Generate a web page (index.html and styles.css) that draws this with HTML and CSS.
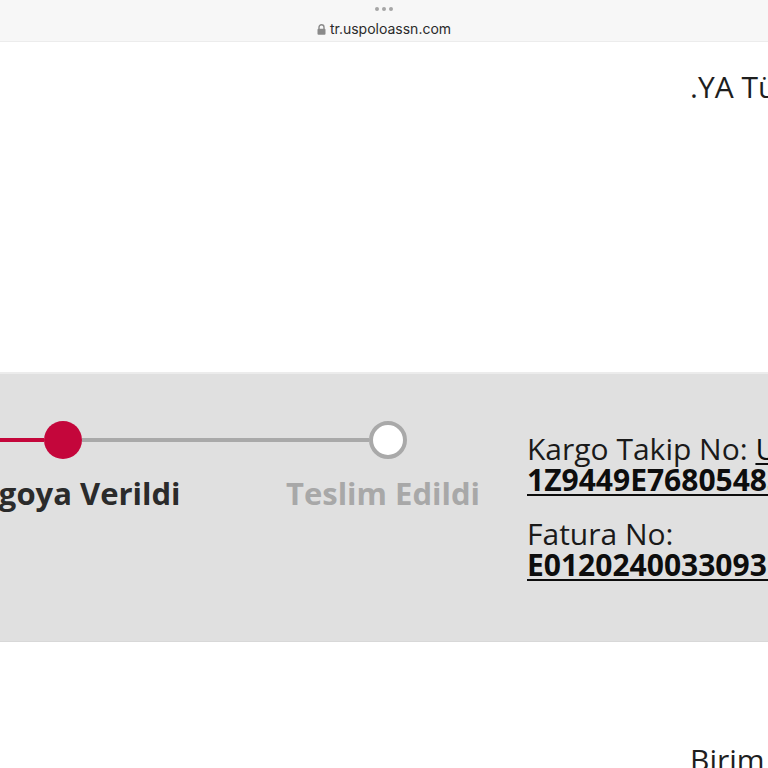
FILE: index.html
```html
<!DOCTYPE html>
<html lang="tr">
<head>
<meta charset="utf-8">
<link rel="stylesheet" href="styles.css">
</head>
<body>
<div class="page">
  <div class="topbar">
    <div class="dots"><span></span><span></span><span></span></div>
    <div class="url">
      <svg class="lock" width="9" height="11" viewBox="0 0 9 11"><path d="M2 5V3.3a2.5 2.5 0 0 1 5 0V5" fill="none" stroke="#8a8a8a" stroke-width="1.4"/><rect x="0.5" y="4.8" width="8" height="6" rx="1" fill="#8a8a8a"/></svg>
      <span>tr.uspoloassn.com</span>
    </div>
  </div>
  <div class="header">
    <div class="company">.YA Türkiye</div>
  </div>
  <div class="band">
    <div class="stepper">
      <div class="dot done"></div>
      <div class="line red"></div>
      <div class="dot done"></div>
      <div class="line gray"></div>
      <div class="dot open"></div>
      <div class="label c1 active">Hazırlanıyor</div>
      <div class="label c3 active">Kargoya Verildi</div>
      <div class="label c5 muted">Teslim Edildi</div>
    </div>
    <div class="info">
      <div class="row">
        <div>Kargo Takip No: <a class="val plain" href="#">UPS</a></div>
        <div><a class="val" href="#">1Z9449E76805483921</a></div>
      </div>
      <div class="row">
        <div>Fatura No:</div>
        <div><a class="val" href="#">E012024003309312</a></div>
      </div>
    </div>
  </div>
  <div class="bottom">
    <div class="unit">Birim Fiyat</div>
  </div>
</div>
</body>
</html>
```

FILE: styles.css
```css
html, body {
  margin: 0;
  padding: 0;
  background: #ffffff;
}
.page {
  width: 768px;
  height: 768px;
  overflow: hidden;
  font-family: "Open Sans", "Noto Sans", sans-serif;
  color: #1e1e1e;
}
.topbar {
  height: 42px;
  background: #f7f7f7;
  border-bottom: 1px solid #ececec;
  box-sizing: border-box;
  display: flex;
  flex-direction: column;
  align-items: center;
}
.dots {
  display: flex;
  gap: 3px;
  margin-top: 7px;
  height: 4px;
}
.dots span {
  width: 4px;
  height: 4px;
  border-radius: 50%;
  background: #a6a6a6;
}
.url {
  display: flex;
  align-items: center;
  gap: 4px;
  margin-top: 10px;
  font-family: "Inter", "Liberation Sans", sans-serif;
  font-size: 14px;
  line-height: 16px;
  color: #2a2a2a;
}
.lock { display: block; }
.header {
  height: 330px;
  box-sizing: border-box;
  padding-left: 690px;
  padding-top: 25px;
}
.company {
  font-size: 30px;
  line-height: 40px;
  white-space: nowrap;
  color: #1e1e1e;
}
.band {
  height: 270px;
  background: #e0e0e0;
  border-top: 2px solid #ececec;
  border-bottom: 1px solid #d8d8d8;
  box-sizing: border-box;
  display: flex;
  align-items: flex-start;
  padding-top: 47px;
}
.stepper {
  flex: none;
  margin-left: -281px;
  display: grid;
  grid-template-columns: 38px 287px 38px 287px 38px;
  grid-template-rows: 38px auto;
  row-gap: 16px;
}
.dot {
  width: 38px;
  height: 38px;
  border-radius: 50%;
  box-sizing: border-box;
  grid-row: 1;
}
.dot.done { background: #c4063b; }
.dot.open { background: #ffffff; border: 4px solid #a9a9a9; }
.line {
  grid-row: 1;
  align-self: center;
  height: 4px;
}
.line.red { background: #c4063b; }
.line.gray { background: #a9a9a9; }
.label {
  grid-row: 2;
  justify-self: center;
  white-space: nowrap;
  font-weight: 700;
  font-size: 31px;
  line-height: 37px;
}
.c1 { grid-column: 1; }
.c3 { grid-column: 3; }
.c5 { grid-column: 5; margin-right: 10px; }
.label.active { color: #2b2b2b; }
.label.muted { color: #a8a8a8; }
.info {
  flex: none;
  margin-left: 120px;
  margin-top: 12px;
  white-space: nowrap;
  font-size: 30px;
  line-height: 31px;
  color: #1a1a1a;
  display: flex;
  flex-direction: column;
  gap: 23px;
}
.val {
  color: #0d0d0d;
  font-weight: 700;
  text-decoration: underline;
  text-decoration-thickness: 2px;
  text-underline-offset: 3px;
}
.val.plain { font-weight: 400; }
.bottom {
  padding-left: 690px;
  padding-top: 98px;
}
.unit {
  font-size: 30px;
  line-height: 40px;
  white-space: nowrap;
}
```
